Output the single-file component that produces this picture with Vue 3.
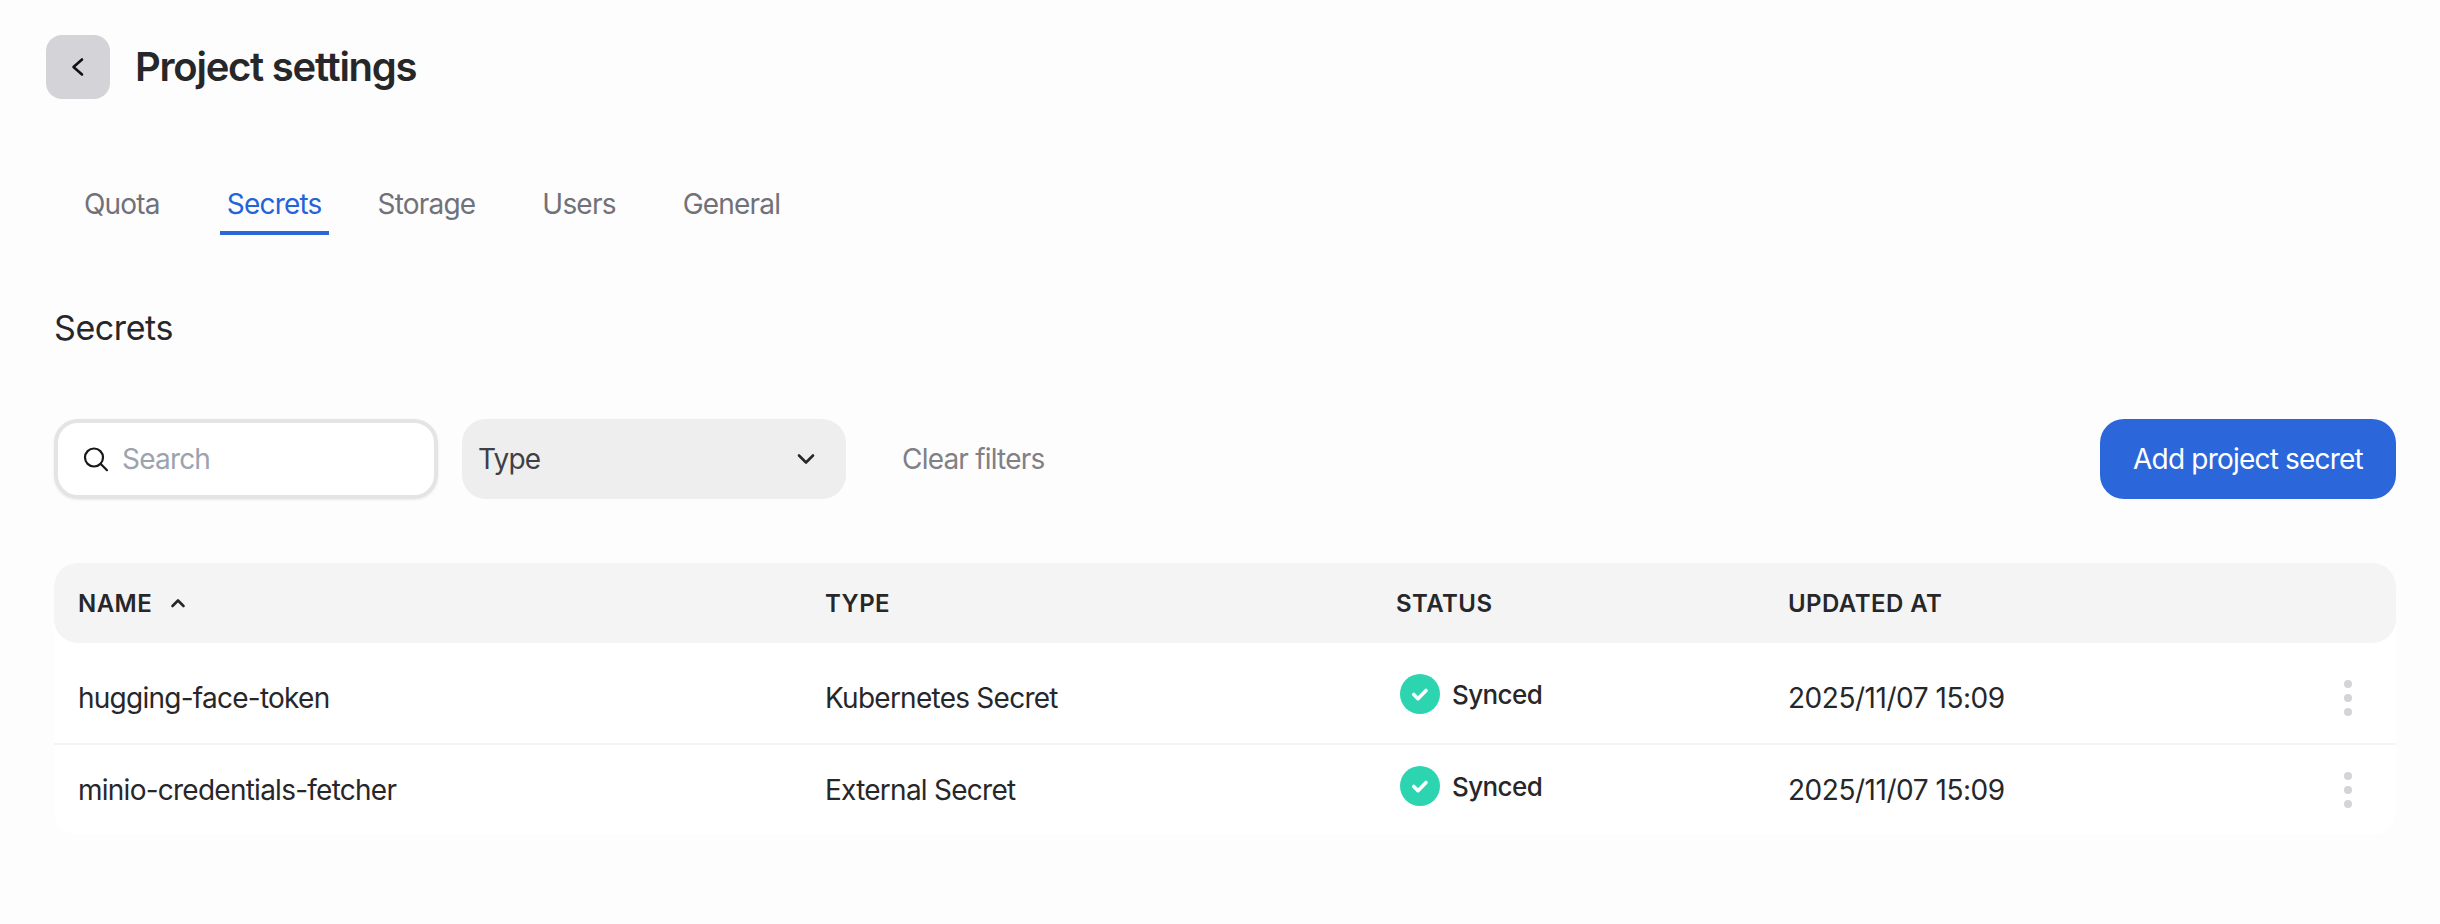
<script setup>
const tabs = ['Quota', 'Secrets', 'Storage', 'Users', 'General']
const secrets = [
  { name: 'hugging-face-token', type: 'Kubernetes Secret', status: 'Synced', updated: '2025/11/07 15:09' },
  { name: 'minio-credentials-fetcher', type: 'External Secret', status: 'Synced', updated: '2025/11/07 15:09' }
]
</script>

<template>
  <div class="page">
    <header class="header">
      <button class="back">
        <svg width="32" height="32" viewBox="0 0 32 32" fill="none" stroke="#111" stroke-width="2.6" stroke-linecap="round" stroke-linejoin="round"><path d="M20 8.5L11.500 16l8.500 7.500" /></svg>
      </button>
      <h1>Project settings</h1>
    </header>

    <nav class="tabs">
      <a v-for="tab in tabs" :key="tab" class="tab" :class="{ active: tab === 'Secrets' }">{{ tab }}</a>
    </nav>

    <h2>Secrets</h2>

    <div class="toolbar">
      <div class="search">
        <svg width="28" height="28" viewBox="0 0 28 28" fill="none" stroke="#18181b" stroke-width="2.2" stroke-linecap="round"><circle cx="12" cy="12.500" r="9" /><path d="M18.800 19l6.200 6.200" /></svg>
        <span>Search</span>
      </div>
      <div class="select">
        <span>Type</span>
        <svg width="28" height="28" viewBox="0 0 28 28" fill="none" stroke="#27272a" stroke-width="2.600" stroke-linecap="round" stroke-linejoin="round"><path d="M7 10.500l7 7 7-7" /></svg>
      </div>
      <a class="clear">Clear filters</a>
      <button class="add">Add project secret</button>
    </div>

    <div class="table">
      <div class="row head">
        <div class="name">NAME
          <svg width="24" height="24" viewBox="0 0 24 24" fill="none" stroke="#27272a" stroke-width="2.600" stroke-linecap="round" stroke-linejoin="round"><path d="M6.500 15l5.500-5.500 5.500 5.500" /></svg>
        </div>
        <div>TYPE</div>
        <div>STATUS</div>
        <div>UPDATED AT</div>
      </div>
      <div class="body">
        <div v-for="s in secrets" :key="s.name" class="row item">
          <div>{{ s.name }}</div>
          <div>{{ s.type }}</div>
          <div class="status">
            <svg width="40" height="40" viewBox="0 0 40 40"><circle cx="20" cy="20" r="20" fill="#2dd4b0" /><path d="M13.800 20.500l4.200 4.200 8-8.200" fill="none" stroke="#fff" stroke-width="3.600" stroke-linecap="round" stroke-linejoin="round" /></svg>
            <span>{{ s.status }}</span>
          </div>
          <div class="date">{{ s.updated }}</div>
          <div class="more"><i></i><i></i><i></i></div>
        </div>
      </div>
    </div>
  </div>
</template>

<style>
html, body {
  margin: 0;
  background: #fdfdfd;
}
</style>

<style scoped>
.page {
  min-height: 924px;
  box-sizing: border-box;
  padding: 35px 44px 0 54px;
  font-family: Inter, "Liberation Sans", sans-serif;
  color: #27272a;
}

.header {
  display: flex;
  align-items: center;
  gap: 25px;
  margin-left: -8px;
}

.back {
  width: 64px;
  height: 64px;
  border: none;
  border-radius: 16px;
  background: #d4d4d8;
  display: flex;
  align-items: center;
  justify-content: center;
  padding: 0;
}

h1 {
  margin: 0;
  font-size: 40px;
  font-weight: 600;
  letter-spacing: -1.25px;
  line-height: 64px;
}

.tabs {
  display: flex;
  margin-top: 71px;
  margin-left: 23px;
}

.tab {
  font-size: 28px;
  letter-spacing: -0.8px;
  line-height: 36px;
  padding: 16px 7px 9px;
  margin-right: 53px;
  color: #71717a;
  border-bottom: 4px solid transparent;
}

.tab.active {
  color: #2563da;
  border-bottom-color: #2b66da;
  margin-right: 42px;
}

h2 {
  margin: 71px 0 0;
  font-size: 34px;
  font-weight: 400;
  letter-spacing: -0.4px;
  line-height: 44px;
}

.toolbar {
  display: flex;
  align-items: center;
  margin-top: 69px;
  font-size: 28px;
  letter-spacing: -0.8px;
}

.search {
  width: 384px;
  height: 80px;
  box-sizing: border-box;
  border: 4px solid #e4e4e7;
  border-radius: 24px;
  background: #fff;
  box-shadow: 0 1px 3px rgba(0, 0, 0, 0.08);
  display: flex;
  align-items: center;
  gap: 12px;
  padding-left: 24px;
  color: #9ca3af;
}

.select {
  width: 384px;
  height: 80px;
  box-sizing: border-box;
  margin-left: 24px;
  border-radius: 24px;
  background: #eeeeee;
  display: flex;
  align-items: center;
  justify-content: space-between;
  padding: 0 26px 0 16px;
  color: #3f3f46;
}

.clear {
  margin-left: 56px;
  color: #808085;
}

.add {
  margin-left: auto;
  width: 296px;
  height: 80px;
  border: none;
  border-radius: 24px;
  background: #2b66da;
  color: #fff;
  font-family: inherit;
  font-size: 28px;
  letter-spacing: -0.8px;
  padding: 0;
}

.table {
  margin-top: 64px;
  background: #fff;
  border-radius: 24px;
}

.row {
  display: grid;
  grid-template-columns: 747px 571px 392px 1fr 56px;
  align-items: center;
  padding-left: 24px;
}

.head {
  height: 80px;
  background: #f4f4f4;
  border-radius: 24px;
  font-size: 24px;
  font-weight: 600;
  letter-spacing: 0.45px;
}

.name {
  display: flex;
  align-items: center;
  gap: 14px;
}

.body {
  padding-top: 10px;
}

.item {
  height: 90px;
  font-size: 28px;
  letter-spacing: -0.75px;
}

.item + .item {
  border-top: 2px solid #f4f4f5;
}

.date {
  letter-spacing: -0.47px;
}

.status {
  display: flex;
  align-items: center;
  gap: 12px;
  font-size: 26px;
  font-weight: 500;
  letter-spacing: -0.6px;
  margin-left: 4px;
  margin-top: -8px;
}

.more {
  display: flex;
  flex-direction: column;
  align-items: center;
  gap: 6px;
  width: 16px;
}

.more i {
  width: 8px;
  height: 8px;
  border-radius: 50%;
  background: #d4d4d8;
}
</style>
